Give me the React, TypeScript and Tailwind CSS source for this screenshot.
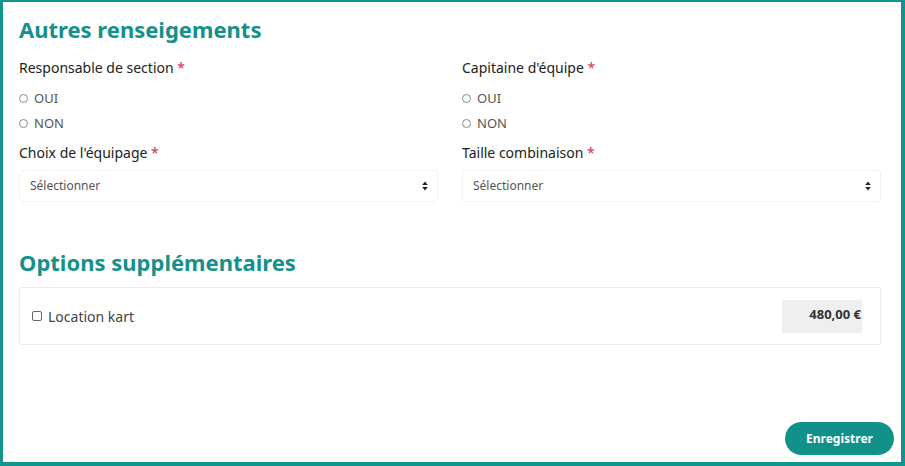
import React from "react";

const font = { fontFamily: '"Noto Sans", "Open Sans", sans-serif' };

function Radio({ label }: { label: string }) {
  return (
    <div className="flex h-[25px] items-center gap-[6px]">
      <span className="box-border h-[9px] w-[9px] rounded-full border border-[#888] bg-white" />
      <span className="text-[13px] text-[#555]">{label}</span>
    </div>
  );
}

function Label({ text, className = "" }: { text: string; className?: string }) {
  return (
    <div className={"h-[20px] text-[14px] leading-[20px] text-[#222] " + className}>
      {text} <span className="text-[#d9304a]">*</span>
    </div>
  );
}

function Select() {
  return (
    <div className="mt-[7px] flex h-[32px] items-center justify-between rounded-[3px] border border-[#f3f3f3] pl-[10px] pr-[9px] shadow-[0_0_2px_rgba(0,0,0,0.03)]">
      <span className="text-[12px] text-[#555]">Sélectionner</span>
      <svg width="6" height="10" viewBox="0 0 6 10">
        <path d="M3 0.5 L5.8 4 L0.2 4 Z" fill="#222" />
        <path d="M3 9.5 L5.8 6 L0.2 6 Z" fill="#222" />
      </svg>
    </div>
  );
}

function Column({ a, b }: { a: string; b: string }) {
  return (
    <div className="flex flex-col">
      <Label text={a} className="mt-[15px]" />
      <div className="mt-[8px]">
        <Radio label="OUI" />
        <Radio label="NON" />
      </div>
      <Label text={b} className="mt-[7px]" />
      <Select />
    </div>
  );
}

export default function App() {
  return (
    <div
      style={font}
      className="box-border flex h-[466px] w-[905px] flex-col overflow-hidden border-b-4 border-l-[3px] border-r-4 border-t-[2px] border-[#12948e] bg-white pl-[16px] pr-[7px] pt-[13px]"
    >
      <div className="mr-[13px]">
        <h2 className="h-[28px] text-[22px] font-bold leading-[28px] text-[#14918b]">
          Autres renseigements
        </h2>
        <div className="grid grid-cols-2 gap-x-[24px]">
          <Column a="Responsable de section" b="Choix de l'équipage" />
          <Column a="Capitaine d'équipe" b="Taille combinaison" />
        </div>
        <h2 className="mt-[46px] h-[28px] text-[22px] font-bold leading-[28px] text-[#14918b]">
          Options supplémentaires
        </h2>
        <div className="mt-[11px] box-border flex h-[58px] items-center justify-between rounded-[2px] border border-[#ececec] pl-[12px] pr-[18px]">
          <div className="flex items-center gap-[6px]">
            <span className="box-border h-[10px] w-[10px] rounded-[2px] border border-[#666] bg-white" />
            <span className="text-[14px] text-[#444]">Location kart</span>
          </div>
          <div className="box-border flex h-[33px] w-[80px] justify-end bg-[#efefef] pr-[1px] pt-[5px] text-[13px] font-bold leading-[18px] text-[#333]">
            480,00 €
          </div>
        </div>
      </div>
      <div className="mt-[77px] flex justify-end">
        <button className="h-[33px] w-[109px] rounded-full bg-[#12918b] text-[12px] font-bold text-white">
          Enregistrer
        </button>
      </div>
    </div>
  );
}
